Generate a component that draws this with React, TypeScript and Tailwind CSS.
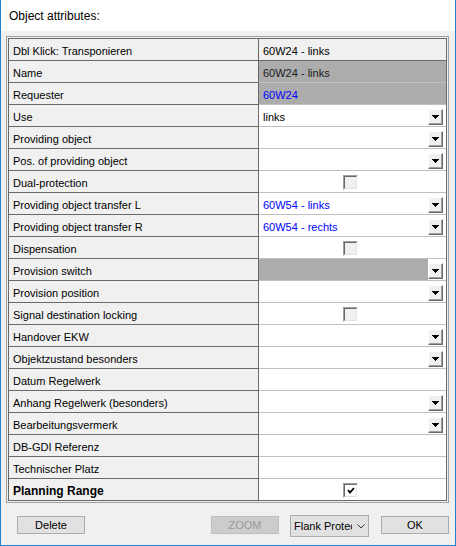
import React from "react";

type Val =
  | { kind: "text"; text: string; color?: string; bg?: string }
  | { kind: "drop"; text?: string; color?: string; bg?: string }
  | { kind: "check"; checked?: boolean }
  | { kind: "empty" };

type Row = { label: string; bold?: boolean; val: Val; darkLine?: boolean };

const rows: Row[] = [
  { label: "Dbl Klick: Transponieren", val: { kind: "text", text: "60W24 - links", bg: "#f0f0f0" }, darkLine: true },
  { label: "Name", val: { kind: "text", text: "60W24 - links", bg: "#acacac", color: "#1a1a1a" } },
  { label: "Requester", val: { kind: "text", text: "60W24", bg: "#acacac", color: "#0000ff" } },
  { label: "Use", val: { kind: "drop", text: "links" } },
  { label: "Providing object", val: { kind: "drop" } },
  { label: "Pos. of providing object", val: { kind: "drop" } },
  { label: "Dual-protection", val: { kind: "check" } },
  { label: "Providing object transfer L", val: { kind: "drop", text: "60W54 - links", color: "#0000ff" } },
  { label: "Providing object transfer R", val: { kind: "drop", text: "60W54 - rechts", color: "#0000ff" } },
  { label: "Dispensation", val: { kind: "check" } },
  { label: "Provision switch", val: { kind: "drop", bg: "#acacac" } },
  { label: "Provision position", val: { kind: "drop" } },
  { label: "Signal destination locking", val: { kind: "check" } },
  { label: "Handover EKW", val: { kind: "drop" } },
  { label: "Objektzustand besonders", val: { kind: "drop" } },
  { label: "Datum Regelwerk", val: { kind: "empty" } },
  { label: "Anhang Regelwerk (besonders)", val: { kind: "drop" } },
  { label: "Bearbeitungsvermerk", val: { kind: "drop" } },
  { label: "DB-GDI Referenz", val: { kind: "empty" } },
  { label: "Technischer Platz", val: { kind: "empty" } },
  { label: "Planning Range", bold: true, val: { kind: "check", checked: true } },
];

function DropButton() {
  return (
    <div className="w-[15px] h-[16px] border-t border-l border-t-white border-l-white border-r border-b border-r-[#696969] border-b-[#696969]">
      <div className="w-full h-full bg-[#f0f0f0] border-r border-b border-r-[#a0a0a0] border-b-[#a0a0a0] flex items-center justify-center">
        <svg width="7" height="4" viewBox="0 0 7 4" shapeRendering="crispEdges">
          <rect x="0" y="0" width="7" height="1" fill="#000" />
          <rect x="1" y="1" width="5" height="1" fill="#000" />
          <rect x="2" y="2" width="3" height="1" fill="#000" />
          <rect x="3" y="3" width="1" height="1" fill="#000" />
        </svg>
      </div>
    </div>
  );
}

function CheckBox({ checked }: { checked?: boolean }) {
  return (
    <div className="w-[15px] h-[15px] border-t border-l border-t-[#a0a0a0] border-l-[#a0a0a0] border-r border-b border-r-white border-b-white">
      <div
        className={
          "w-full h-full border-t border-l border-t-[#696969] border-l-[#696969] border-r border-b border-r-[#e3e3e3] border-b-[#e3e3e3] flex items-center justify-center " +
          (checked ? "bg-white" : "bg-[#f0f0f0]")
        }
      >
        {checked && (
          <svg width="8" height="7" viewBox="0 0 8 7">
            <path d="M1 3 L3 5.5 L7 1" fill="none" stroke="#000" strokeWidth="1.8" />
          </svg>
        )}
      </div>
    </div>
  );
}

function ValueCell({ val }: { val: Val }) {
  if (val.kind === "text") {
    return (
      <div className="h-full flex items-center pl-[4px] pt-[3px]" style={{ background: val.bg ?? "#fff", color: val.color ?? "#000" }}>
        {val.text}
      </div>
    );
  }
  if (val.kind === "drop") {
    return (
      <div className="h-full flex">
        <div className="flex-1 flex items-center pl-[4px] pt-[3px]" style={{ background: val.bg ?? "#fff", color: val.color ?? "#000" }}>
          {val.text ?? ""}
        </div>
        <div className="w-[18px] h-full bg-white flex items-end pb-[1px]">
          <DropButton />
        </div>
      </div>
    );
  }
  if (val.kind === "check") {
    return (
      <div className="h-full bg-white flex items-center pl-[84px] pt-[2px]">
        <CheckBox checked={val.checked} />
      </div>
    );
  }
  return <div className="h-full bg-white" />;
}

export default function App() {
  return (
    <div className="w-[456px] h-[546px] bg-[#f0f0f0] border-l border-r border-b border-[#1883d7] flex flex-col font-['Liberation_Sans',Arial,sans-serif] text-black overflow-hidden">
      <div className="h-[31px] bg-white pl-[8px] pt-[9px] text-[12px] leading-[14px] shrink-0">Object attributes:</div>

      <div className="ml-[5px] mt-[5px] w-[443px] h-[467px] border border-[#a0a0a0] p-[1px]">
        <div className="w-full h-full border border-[#696969] flex flex-col text-[11px] leading-[13px]">
          {rows.map((r, i) => {
            const last = i === rows.length - 1;
            return (
              <div key={i} className={"flex shrink-0 " + (last ? "h-[21px]" : "h-[22px]")}>
                <div
                  className={
                    "w-[249px] shrink-0 bg-[#f0f0f0] flex items-center pl-[4px] pt-[3px] " +
                    (last ? "" : "border-b border-[#696969] ") +
                    (r.bold ? "font-bold text-[12px]" : "")
                  }
                >
                  {r.label}
                </div>
                <div className="w-[1px] shrink-0 bg-[#696969]" />
                <div
                  className={
                    "flex-1 min-w-0 " +
                    (last ? "" : r.darkLine ? "border-b border-[#696969]" : "border-b border-[#c0c0c0]")
                  }
                >
                  <ValueCell val={r.val} />
                </div>
              </div>
            );
          })}
        </div>
      </div>

      <div className="flex items-start mt-[12px] text-[11px]">
        <div className="ml-[16px] mt-[1px] w-[68px] h-[18px] bg-[#e1e1e1] border border-[#adadad] flex items-center justify-center">Delete</div>
        <div className="ml-[126px] mt-[1px] w-[68px] h-[18px] bg-[#cccccc] border border-[#bfbfbf] text-[#9a9a9a] flex items-center justify-center">ZOOM</div>
        <div className="ml-[11px] w-[79px] h-[22px] bg-[#e1e1e1] border border-[#adadad] flex items-center">
          <div className="ml-[3px] w-[58px] overflow-hidden whitespace-nowrap">Flank Protection</div>
          <svg className="ml-[5px]" width="8" height="5" viewBox="0 0 8 5">
            <path d="M0.5 0.5 L4 4 L7.5 0.5" fill="none" stroke="#333" strokeWidth="1" />
          </svg>
        </div>
        <div className="ml-[12px] mt-[1px] w-[68px] h-[18px] bg-[#e1e1e1] border border-[#adadad] flex items-center justify-center">OK</div>
      </div>
    </div>
  );
}
